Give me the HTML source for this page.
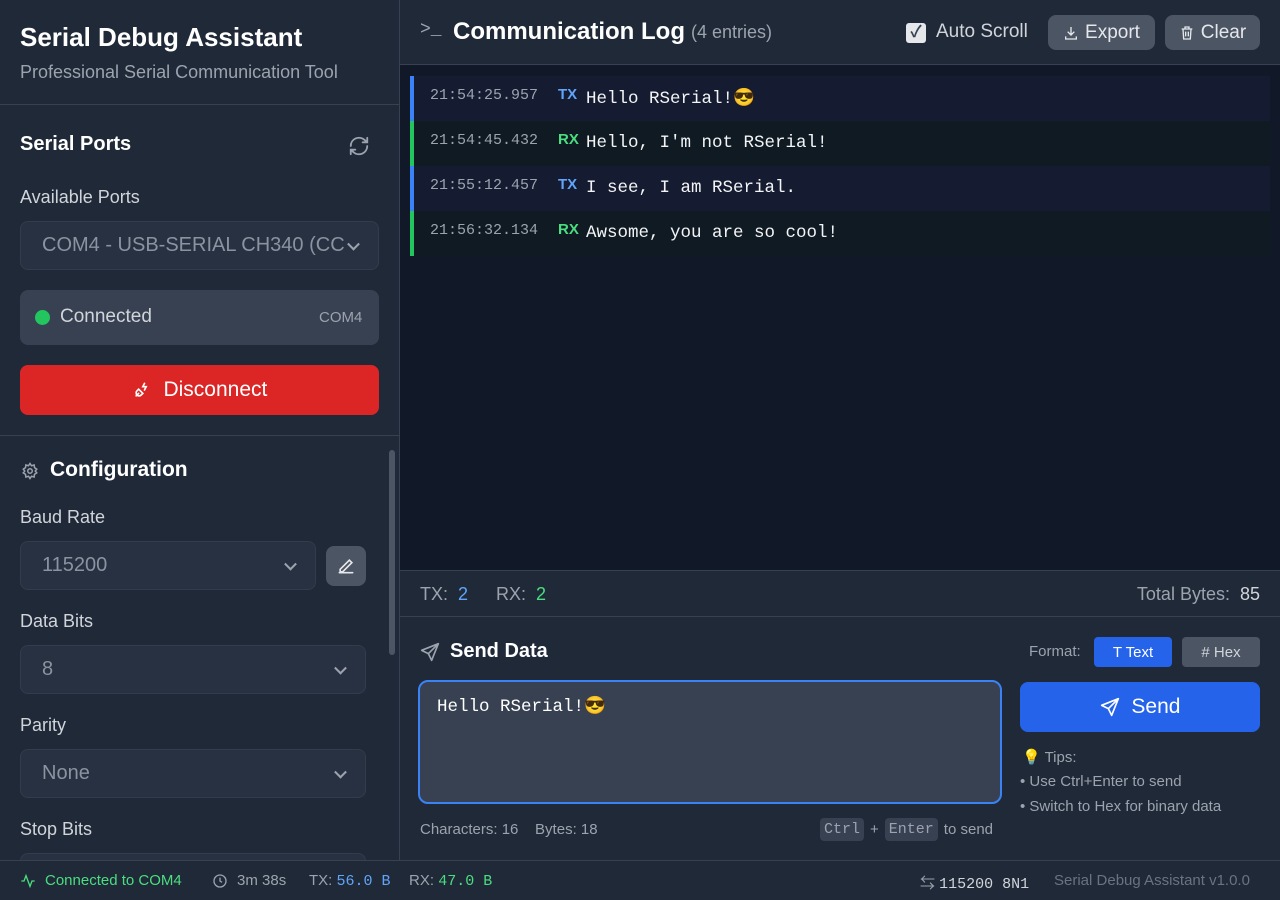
<!DOCTYPE html>
<html><head><meta charset="utf-8"><style>
*{box-sizing:border-box;margin:0;padding:0}
body{width:1280px;height:900px;overflow:hidden;background:#111827;font-family:"Liberation Sans","Noto Sans CJK SC",sans-serif;color:#e5e7eb;position:relative}
.mono{font-family:"Liberation Mono","DejaVu Sans Mono",monospace}
.side{position:absolute;left:0;top:0;width:400px;height:860px;background:#1f2937;border-right:1px solid #374151;overflow:hidden}
.abs{position:absolute}
.sel{position:absolute;background:#273141;border:1px solid #323c4c;border-radius:8px;color:#8a93a0;font-size:20px;padding-left:21px;display:flex;align-items:center}
.sel.c:after{content:"";position:absolute;right:20px;top:50%;width:7px;height:7px;border-right:2px solid #9ca3af;border-bottom:2px solid #9ca3af;transform:translateY(-70%) rotate(45deg)}
.lbl{position:absolute;left:20px;font-size:18px;color:#d1d5db}
.main{position:absolute;left:400px;top:0;width:880px;height:860px}
.row{position:absolute;left:10px;width:860px;height:45px;border-left:4px solid}
.row .t{position:absolute;left:16px;top:11px;font-size:15px;color:#9ca3af}
.row .d{position:absolute;left:144px;top:10px;font-size:15px;font-weight:bold}
.row .m{position:absolute;left:172px;top:12px;font-size:17.5px;color:#f3f4f6}
.btn{position:absolute;border-radius:8px;display:flex;align-items:center;justify-content:center;gap:6px}
</style></head><body>
<div class="side">
 <div class="abs" style="left:20px;top:22px;font-size:26px;font-weight:bold;color:#fff">Serial Debug Assistant</div>
 <div class="abs" style="left:20px;top:62px;font-size:18px;color:#9ca3af">Professional Serial Communication Tool</div>
 <div class="abs" style="left:0;top:104px;width:400px;height:1px;background:#374151"></div>
 <div class="abs" style="left:20px;top:133px;font-size:20px;font-weight:bold;color:#fff">Serial Ports</div>
 <svg class="abs" style="left:348px;top:135px" width="22" height="22" viewBox="0 0 24 24" fill="none" stroke="#9ca3af" stroke-width="2" stroke-linecap="round"><path d="M3 12a9 9 0 0 1 15-6.7L21 8M21 3v5h-5M21 12a9 9 0 0 1-15 6.7L3 16M3 21v-5h5"/></svg>
 <div class="lbl" style="top:187px">Available Ports</div>
 <div class="sel c" style="left:20px;top:221px;width:359px;height:49px">COM4 - USB-SERIAL CH340 (CC</div>
 <div class="abs" style="left:20px;top:290px;width:359px;height:55px;background:#374151;border-radius:8px"></div>
 <div class="abs" style="left:35px;top:310px;width:15px;height:15px;border-radius:50%;background:#22c55e"></div>
 <div class="abs" style="left:60px;top:306px;font-size:19px;color:#d1d5db">Connected</div>
 <div class="abs" style="left:319px;top:309px;font-size:15px;color:#9ca3af">COM4</div>
 <div class="btn" style="left:20px;top:365px;width:359px;height:50px;background:#dc2626;color:#fff;font-size:21px"><svg width="20" height="20" viewBox="0 0 24 24" fill="none" stroke="#fff" stroke-width="2" stroke-linecap="round"><path d="M5 19l3-3M8 11l5 5-2 2a3.5 3.5 0 0 1-5-5zM15 4l-2 4h4l-2 4"/></svg>&nbsp;Disconnect</div>
 <div class="abs" style="left:0;top:435px;width:400px;height:1px;background:#374151"></div>
 <div class="abs" style="left:389px;top:450px;width:6px;height:205px;background:#4b5563;border-radius:3px"></div>
 <svg class="abs" style="left:21px;top:462px" width="18" height="18" viewBox="0 0 24 24" fill="none" stroke="#9ca3af" stroke-width="2"><circle cx="12" cy="12" r="3"/><path d="M12 2l2 3 3.5-1 .5 3.5 3 2-2 2.5 2 2.5-3 2-.5 3.5-3.5-1-2 3-2-3-3.5 1-.5-3.5-3-2 2-2.5-2-2.5 3-2 .5-3.5 3.5 1z"/></svg>
 <div class="abs" style="left:50px;top:458px;font-size:21px;font-weight:bold;color:#fff">Configuration</div>
 <div class="lbl" style="top:507px">Baud Rate</div>
 <div class="sel c" style="left:20px;top:541px;width:296px;height:49px">115200</div>
 <div class="btn" style="left:326px;top:546px;width:40px;height:40px;background:#4b5563"><svg width="20" height="20" viewBox="0 0 24 24" fill="none" stroke="#e5e7eb" stroke-width="2" stroke-linecap="round"><path d="M4 20h16M5 16L16 5l3 3L8 19H5z"/></svg></div>
 <div class="lbl" style="top:611px">Data Bits</div>
 <div class="sel c" style="left:20px;top:645px;width:346px;height:49px">8</div>
 <div class="lbl" style="top:715px">Parity</div>
 <div class="sel c" style="left:20px;top:749px;width:346px;height:49px">None</div>
 <div class="lbl" style="top:819px">Stop Bits</div>
 <div class="sel" style="left:20px;top:853px;width:346px;height:20px"></div>
</div>
<div class="main">
 <div class="abs" style="left:0;top:0;width:880px;height:65px;background:#1f2937;border-bottom:1px solid #374151"></div>
 <div class="abs mono" style="left:20px;top:20px;font-size:18px;color:#9ca3af">&gt;_</div>
 <div class="abs" style="left:53px;top:18px;font-size:24px;font-weight:bold;color:#fff">Communication Log</div>
 <div class="abs" style="left:291px;top:22px;font-size:18px;color:#9ca3af">(4 entries)</div>
 <div class="abs" style="left:506px;top:23px;width:20px;height:20px;background:#e5e7eb;border-radius:3px;color:#374151;font-size:16px;font-weight:bold;text-align:center;line-height:20px">✓</div>
 <div class="abs" style="left:536px;top:21px;font-size:19px;color:#d1d5db">Auto Scroll</div>
 <div class="btn" style="left:648px;top:15px;width:107px;height:35px;background:#4b5563;color:#e5e7eb;font-size:19px"><svg width="16" height="16" viewBox="0 0 24 24" fill="none" stroke="#e5e7eb" stroke-width="2"><path d="M12 3v12M7 10l5 5 5-5M4 17v4h16v-4"/></svg>Export</div>
 <div class="btn" style="left:765px;top:15px;width:95px;height:35px;background:#4b5563;color:#e5e7eb;font-size:19px"><svg width="16" height="16" viewBox="0 0 24 24" fill="none" stroke="#e5e7eb" stroke-width="2"><path d="M4 6h16M9 6V3h6v3M6 6l1 15h10l1-15M10 10v7M14 10v7"/></svg>Clear</div>
 <div class="row" style="top:76px;background:#151b30;border-color:#3b82f6"><span class="t mono">21:54:25.957</span><span class="d" style="color:#60a5fa">TX</span><span class="m mono">Hello RSerial!😎</span></div>
 <div class="row" style="top:121px;background:#0f1a22;border-color:#22c55e"><span class="t mono">21:54:45.432</span><span class="d" style="color:#4ade80">RX</span><span class="m mono">Hello, I'm not RSerial!</span></div>
 <div class="row" style="top:166px;background:#151b30;border-color:#3b82f6"><span class="t mono">21:55:12.457</span><span class="d" style="color:#60a5fa">TX</span><span class="m mono">I see, I am RSerial.</span></div>
 <div class="row" style="top:211px;background:#0f1a22;border-color:#22c55e"><span class="t mono">21:56:32.134</span><span class="d" style="color:#4ade80">RX</span><span class="m mono">Awsome, you are so cool!</span></div>
 <div class="abs" style="left:0;top:570px;width:880px;height:290px;background:#1f2937;border-top:1px solid #374151"></div>
 <div class="abs" style="left:0;top:616px;width:880px;height:1px;background:#374151"></div>
 <div class="abs" style="left:20px;top:584px;font-size:18px;color:#9ca3af">TX: <span style="color:#60a5fa">&nbsp;2</span></div>
 <div class="abs" style="left:96px;top:584px;font-size:18px;color:#9ca3af">RX: <span style="color:#4ade80">&nbsp;2</span></div>
 <div class="abs" style="right:20px;top:584px;font-size:18px;color:#9ca3af">Total Bytes: <span style="color:#d1d5db">&nbsp;85</span></div>
 <svg class="abs" style="left:20px;top:642px" width="20" height="20" viewBox="0 0 24 24" fill="none" stroke="#9ca3af" stroke-width="2" stroke-linejoin="round"><path d="M22 2L2 10l8 4 4 8zM22 2L10 14"/></svg>
 <div class="abs" style="left:50px;top:640px;font-size:20px;font-weight:bold;color:#fff">Send Data</div>
 <div class="abs" style="left:629px;top:643px;font-size:15px;color:#9ca3af">Format:</div>
 <div class="btn" style="left:694px;top:637px;width:78px;height:30px;background:#2563eb;color:#fff;font-size:15px;border-radius:4px">T Text</div>
 <div class="btn" style="left:782px;top:637px;width:78px;height:30px;background:#4b5563;color:#d1d5db;font-size:15px;border-radius:4px"># Hex</div>
 <div class="abs" style="left:18px;top:680px;width:584px;height:124px;background:#374151;border:2px solid #3b82f6;border-radius:10px"></div>
 <div class="abs mono" style="left:37px;top:696px;font-size:17.5px;color:#fff">Hello RSerial!😎</div>
 <div class="btn" style="left:620px;top:682px;width:240px;height:50px;background:#2563eb;color:#fff;font-size:21px"><svg width="20" height="20" viewBox="0 0 24 24" fill="none" stroke="#fff" stroke-width="2" stroke-linejoin="round"><path d="M22 2L2 10l8 4 4 8zM22 2L10 14"/></svg>&nbsp;Send</div>
 <div class="abs" style="left:622px;top:748px;font-size:15px;color:#9ca3af">💡 Tips:</div>
 <div class="abs" style="left:620px;top:773px;font-size:15px;color:#9ca3af">• Use Ctrl+Enter to send</div>
 <div class="abs" style="left:620px;top:798px;font-size:15px;color:#9ca3af">• Switch to Hex for binary data</div>
 <div class="abs" style="left:20px;top:821px;font-size:15px;color:#9ca3af">Characters: 16 &nbsp;&nbsp; Bytes: 18</div>
 <div class="abs" style="left:420px;top:818px;font-size:15px;color:#9ca3af;display:flex;align-items:center;gap:6px"><span class="mono" style="background:#374151;padding:3px 4px;border-radius:4px">Ctrl</span>+<span class="mono" style="background:#374151;padding:3px 4px;border-radius:4px">Enter</span>to send</div>
</div>
<div class="abs" style="left:0;top:860px;width:1280px;height:40px;background:#1f2937;border-top:1px solid #374151;font-size:15px;color:#9ca3af">
 <svg class="abs" style="left:20px;top:12px" width="16" height="16" viewBox="0 0 24 24" fill="none" stroke="#4ade80" stroke-width="2"><path d="M2 12h4l3-8 6 16 3-8h4"/></svg>
 <div class="abs" style="left:45px;top:11px;color:#4ade80">Connected to COM4</div>
 <svg class="abs" style="left:212px;top:12px" width="16" height="16" viewBox="0 0 24 24" fill="none" stroke="#9ca3af" stroke-width="2"><circle cx="12" cy="12" r="9"/><path d="M12 7v5l3 2"/></svg>
 <div class="abs" style="left:237px;top:11px">3m 38s</div>
 <div class="abs" style="left:309px;top:11px">TX: <span class="mono" style="color:#60a5fa">56.0 B</span></div>
 <div class="abs" style="left:409px;top:11px">RX: <span class="mono" style="color:#4ade80">47.0 B</span></div>
 <div class="abs" style="left:920px;top:11px">⇆ <span class="mono" style="color:#d1d5db">115200 8N1</span></div>
 <div class="abs" style="left:1054px;top:11px;color:#6b7280">Serial Debug Assistant v1.0.0</div>
</div>
</body></html>
